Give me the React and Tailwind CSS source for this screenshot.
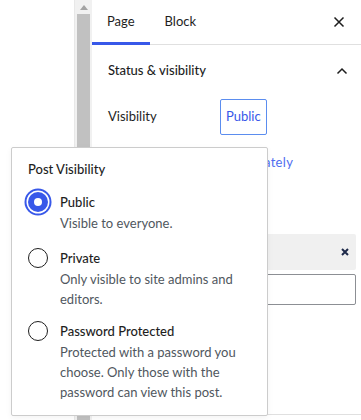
export default function App() {
  const font = { fontFamily: 'Lato, "Noto Sans", sans-serif' };
  return (
    <div className="relative w-[361px] h-[420px] overflow-hidden bg-white flex text-[13px] text-[#1e1e1e]" style={font}>
      {/* left blank area */}
      <div className="w-[74px] shrink-0 bg-white" />
      {/* scrollbar */}
      <div className="w-[18px] shrink-0 bg-[#f1f1f1] flex flex-col items-center border-l border-[#e8e8e8]">
        <div className="h-[14px] flex items-center justify-center">
          <svg width="8" height="5" viewBox="0 0 8 5"><polygon points="4,0 8,5 0,5" fill="#a3a3a3" /></svg>
        </div>
        <div className="w-[13px] flex-1 bg-[#c1c1c1]" />
      </div>
      {/* sidebar */}
      <div className="flex-1 flex flex-col bg-white">
        <div className="h-[45px] flex items-stretch border-b border-[#e0e0e0]">
          <div className="relative px-[15px] flex items-center">
            Page
            <div className="absolute left-0 right-0 bottom-[-1px] h-[3px] bg-[#3858e9]" />
          </div>
          <div className="px-[15px] flex items-center">Block</div>
          <div className="ml-auto w-[36px] mr-[4px] flex items-center justify-center">
            <svg width="12" height="12" viewBox="0 0 12 12"><path d="M1.5 1.5 L10.5 10.5 M10.5 1.5 L1.5 10.5" stroke="#1e1e1e" strokeWidth="1.5" /></svg>
          </div>
        </div>
        <div className="h-[52px] flex items-center pl-[16px] pr-[13px] font-medium">
          <span>Status &amp; visibility</span>
          <svg className="ml-auto" width="12" height="8" viewBox="0 0 12 8"><path d="M1.5 6.5 L6 2 L10.5 6.5" fill="none" stroke="#1e1e1e" strokeWidth="1.5" /></svg>
        </div>
        <div className="flex items-center pl-[16px] h-[36px] mt-[2px]">
          <span className="w-[112px]">Visibility</span>
          <div className="h-[36px] px-[5px] flex items-center border border-[#5b8def] rounded-[2px] text-[#3858e9]">Public</div>
        </div>
        <div className="flex items-center pl-[16px] h-[20px] mt-[18px]">
          <span className="w-[112px]">Publish</span>
          <span className="text-[#4f6ef0] tracking-[0.3px]">Immediately</span>
        </div>
        <div className="mt-[61px] mr-[5px] h-[36px] bg-[#f0f0f0] rounded-[2px] flex items-center justify-end pr-[6px]">
          <svg width="10" height="10" viewBox="0 0 10 10"><path d="M2 2 L8 8 M8 2 L2 8" stroke="#1e2a4a" strokeWidth="2" /></svg>
        </div>
        <div className="mt-[4px] mr-[5px] h-[31px] border border-[#8c8f94] rounded-[2px]" />
        <div className="mt-[109px] border-t border-[#e0e0e0]" />
      </div>

      {/* popover */}
      <div className="absolute left-[11px] top-[147px] w-[257px] h-[269px] bg-white border border-[#cccccc] rounded-[2px] shadow-[0_2px_6px_rgba(0,0,0,0.05)] pl-[16px] pr-[12px] pt-[11px]">
        <div className="leading-[20px] font-medium">Post Visibility</div>
        <div className="mt-[13px] flex flex-col">
          <Option checked label="Public" desc={["Visible to everyone."]} />
          <div className="h-[15px]" />
          <Option label="Private" desc={["Only visible to site admins and", "editors."]} />
          <div className="h-[12px]" />
          <Option label="Password Protected" desc={["Protected with a password you", "choose. Only those with the", "password can view this post."]} />
        </div>
      </div>
    </div>
  );
}

function Option({ checked, label, desc }) {
  return (
    <div className="flex items-start gap-[12px]">
      <div className="w-[20px] h-[20px] shrink-0 flex items-center justify-center">
        {checked ? (
          <div className="w-[20px] h-[20px] rounded-full bg-[#3858e9] flex items-center justify-center shadow-[0_0_0_1.5px_#fff,0_0_0_3.5px_#3858e9]">
            <div className="w-[8px] h-[8px] rounded-full bg-white" />
          </div>
        ) : (
          <div className="w-[20px] h-[20px] rounded-full border-[1.5px] border-[#1e1e1e]" />
        )}
      </div>
      <div className="flex flex-col">
        <div className="leading-[20px] font-medium">{label}</div>
        <div className="mt-[1px] leading-[20px] text-[#50575e]">
          {desc.map((d, i) => (
            <div key={i}>{d}</div>
          ))}
        </div>
      </div>
    </div>
  );
}
